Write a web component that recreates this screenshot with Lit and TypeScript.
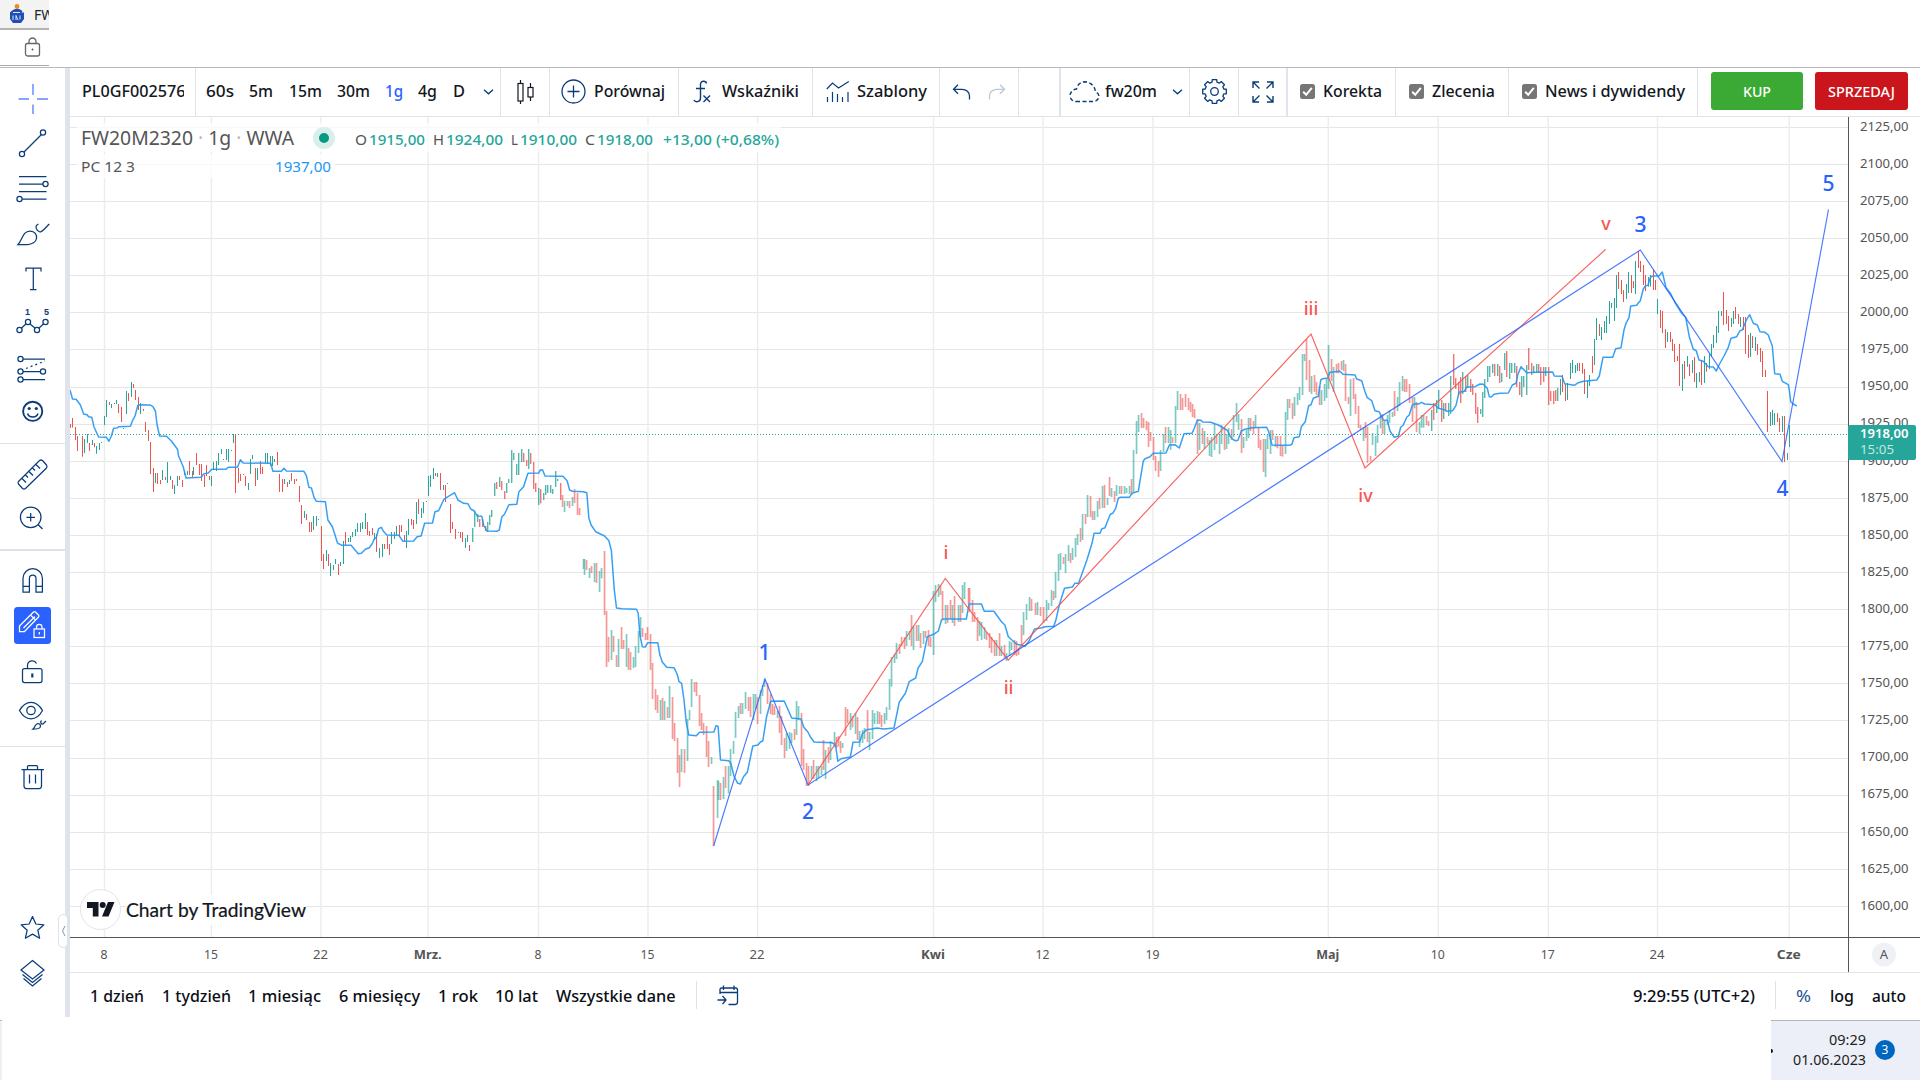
import { LitElement, html, svg, css } from "lit";
import { customElement, property } from "lit/decorators.js";

/* ---------- text that fills an exact width ---------- */
@customElement("fit-text")
class FitText extends LitElement {
  @property({ type: Number }) w = 0;
  static styles = css`
    :host { display: block; flex: none; white-space: nowrap; }
    span { display: inline-block; transform-origin: 0 50%; }
  `;
  render() { return html`<span><slot></slot></span>`; }
  firstUpdated() {
    const s = this.renderRoot.querySelector("span") as HTMLElement;
    const n = s.getBoundingClientRect().width;
    this.style.width = this.w + "px";
    if (n > 0) s.style.transform = `scaleX(${this.w / n})`;
  }
}

/* ---------- price bars: origin, scale and "x top bottom colour" ---------- */
interface Segment { ox: number; oy: number; sx: number; bars: string }
const SEGMENTS: Segment[] = [
  { ox: 60, oy: 360, sx: 2.8, bars: `29 192 203r;35 174 203r;43 201 240r;49 228 273r;63 228 290r;69 237 279g;77 222 249g;82 249 273r;91 240 255g;96 249 262r;102 258 281g;110 249 270g;116 246 249g;124 168 195g;130 120 171g;138 126 135r;144 132 144g;152 129 132g;158 120 132g;164 132 159r;172 141 186r;177 204 207g;186 93 162g;191 99 123r;200 66 111g;206 72 84r;211 90 120r;219 111 150r;225 129 162g;233 147 153r;239 186 216r;247 210 243r;253 246 342r;261 324 396r;267 339 369g;273 339 372r;281 360 372r;287 330 360g;295 351 360r;301 306 369g;309 348 360g;315 360 387r;320 375 402g;328 348 378g;334 348 360r;343 360 381r;348 333 345g;357 333 345g;362 303 345r;370 333 351r;374 321 345g;382 279 315r;390 312 345r;397 312 363r;404 345 381r;410 315 348r;418 348 360r;425 348 378g;429 306 330g;438 303 333g;443 279 315g;452 267 282g;458 297 300g;467 267 300g;472 267 306g;481 270 273g;486 222 249g;491 222 399r;499 324 369r;505 342 363r;513 342 345r;519 348 378r;528 369 390g;533 297 342g;539 285 297g;548 324 378r;553 324 360g;561 303 342r;567 321 342r;575 279 309g;581 279 312g;589 288 318g;595 288 318g;600 297 306g;609 276 315r;614 342 396r;623 357 396r;628 357 372g;637 366 381r;642 360 372g;648 339 363r;656 357 372r;662 357 363r;670 378 426r;676 435 492r;685 453 474g;690 462 480r;698 486 516r;704 486 516r;710 468 510g;718 468 498g;724 477 480g;732 498 603r;738 582 627r;746 570 603g;751 582 618r;757 609 648g;765 615 630g;771 597 612g;779 612 645r;786 606 618g;794 543 612g;799 516 555r;807 534 546g;813 528 546g;819 516 531g;827 507 528g;833 489 516g;841 489 516g;847 486 507g;855 459 507g;861 486 525r;867 513 528r;875 504 525r;880 519 540g;886 522 576r;894 564 594g;903 552 591g;909 552 567r;917 528 567r;923 552 585r;929 516 552g;937 516 537g;942 498 525g;951 495 531r;957 495 516r;964 525 543r;970 513 564g;976 477 525g;985 477 495r;990 480 507r;999 426 492g;1004 417 462r;1012 444 474g;1018 426 460g;1027 423 426g;1032 348 408g;1038 345 381g;1046 324 357g;1052 339 348r;1057 339 351g;1065 339 390r;1074 375 390g;1079 375 426r;1086 369 372g;1094 432 519r;1099 486 507r;1108 507 537r;1116 516 519g;1122 516 534r;1127 516 546r;1135 534 564g;1141 525 546g;1147 555 573r;1155 504 546g;1161 453 501g;1169 462 486g;1175 477 501r;1183 477 501r;1191 498 513r;1197 486 516g;1203 465 495g;1209 450 471g;1217 369 408g;1222 366 387r;1231 351 381g;1236 363 390r;1245 393 417r;1250 369 399g;1256 357 369g;1265 270 369g;1270 279 300g;1279 312 345g;1285 279 345g;1293 267 306g;1299 279 306r;1307 300 318r;1312 267 327g;1317 279 312r;1326 306 387r;1332 369 396r;1340 384 435g;1346 387 430r;1354 399 420g;1360 375 405g;1366 375 399g;1374 375 399g;1380 387 402g;1388 333 381g;1394 357 363g;1402 369 420r;1408 405 441r;1413 423 456g;1422 423 438g;1427 423 444r;1435 411 438g;1441 387 429r;1449 399 465r;1455 444 465r` },
  { ox: 560, oy: 530, sx: 2.904, bars: `67 87 117g;72 87 135g;78 90 120r;87 114 144g;92 108 129r;101 99 156g;107 99 159r;116 123 186g;121 114 145g;128 63 255r;136 243 411r;142 321 396r;150 300 390g;156 318 366r;165 375 411r;170 327 411g;180 291 357r;185 330 357r;192 312 411g;199 354 420r;205 366 420r;214 381 414g;220 348 411g;228 303 369g;234 261 321g;240 294 321r;249 309 330r;255 291 330r;264 312 420r;269 399 507r;278 477 540r;284 495 549r;292 510 570g;298 504 570r;304 513 570g;313 531 564r;319 468 564g;328 501 627r;333 579 633r;342 624 729r;348 675 771r;354 657 726g;362 657 729r;369 567 693g;377 540 570g;382 447 531g;391 456 486r;397 456 498r;406 495 588r;412 549 600r;418 579 615r;426 588 681r;432 633 711r;440 681 702g;446 768 948r;456 750 864g;461 753 810g;467 759 810r;475 741 807g;482 708 774r;490 708 790g;496 657 738g;504 633 672g;511 546 624g;519 528 564g;525 519 552r;530 519 552g;540 486 537g;546 501 543r;554 501 561r;561 492 570g;569 492 537g;574 501 582r;581 480 552g;589 465 498g;594 447 471g;602 459 522r;610 492 552r;618 522 555r;624 528 555r;632 543 564g;638 528 609r;644 558 645r;653 624 684r;659 609 663g;667 606 657g;673 609 639g;681 597 630r;687 513 615g;693 528 570g;702 549 708r;708 657 720r;716 699 768r;723 708 768r;731 708 747g;737 690 747r;746 708 753g;752 708 745g;758 708 735g;766 630 720r;771 660 747g;780 651 699r;786 633 690g;796 606 651g;802 621 654r;808 618 650r;815 633 669r;821 639 654g;830 531 618r;836 537 580r;844 549 600g;850 558 592r;858 549 612g;865 561 630r;871 603 651g;879 600 639g;885 594 627g;893 540 636r;900 606 660g;908 540 627g;914 549 582g;922 543 582g;928 546 582r;934 555 591r;943 549 582g;949 531 570g;958 447 540g;964 381 470g;972 372 399g;978 339 387g;985 342 372r;993 321 348r;999 321 357r;1007 303 348g;1015 303 330g;1022 255 348r;1028 288 360g;1034 285 333r;1042 285 333g;1048 309 354r;1056 303 342g;1062 303 324r;1071 300 348r;1077 321 351r;1086 183 375g;1091 165 216g;1098 162 201g;1105 165 195r;1111 183 270r;1120 225 282g;1126 225 279r;1135 210 267r;1140 225 279g;1147 198 288r;1156 225 276g;1162 225 276r;1169 165 249g;1176 156 207g;1185 174 222r;1190 174 246r;1199 210 276r;1205 246 276r;1211 261 333r;1219 273 318g;1225 276 330g;1234 291 327g;1240 306 330r;1248 309 354r;1254 321 369r;1262 330 378r;1268 330 378g;1275 309 378r;1282 348 378g;1290 345 384r;1296 369 393g;1304 333 378g;1312 336 360g;1319 330 375r;1325 333 378r;1332 357 375r;1339 285 345r;1346 246 315g;1354 222 270g;1362 201 243g;1368 207 243r;1380 219 255r;1388 216 255g;1396 231 258r;1403 231 279r;1412 210 273g;1418 219 240g;1427 180 228g;1433 183 210r` },
  { ox: 1000, oy: 380, sx: 3, bars: `165 576 654g;174 522 603g;180 519 570g;189 531 552r;195 522 579g;204 495 543g;210 519 549r;216 504 540g;225 474 531g;231 462 495g;240 444 486r;246 402 480g;255 402 432r;261 345 411g;270 348 411r;276 393 420r;282 393 420g;291 363 411g;297 354 387r;306 318 384g;312 315 384r;321 354 375g;327 291 348r;333 324 351g;342 333 366r;348 315 348g;357 318 342g;363 318 342r;372 318 342g;378 324 339g;387 318 342g;393 297 345r;399 210 336g;408 123 222g;414 105 156g;423 99 144r;429 114 144r;438 123 150r;444 126 201r;450 156 183r;459 171 240r;465 228 273r;474 243 291r;480 210 273g;489 162 216g;495 141 189r;504 141 189g;510 150 210g;516 171 189r;525 78 189g;531 33 90g;540 42 90r;546 54 90r;555 42 81r;564 54 90r;570 66 96r;576 72 111r;582 87 114r;591 117 222r;597 129 210g;606 144 192r;612 153 207g;621 171 192r;627 180 228g;633 171 231g;642 132 210g;648 168 192r;657 162 222g;663 135 192g;672 141 210r;678 162 207g;684 144 192g;693 147 180r;699 105 171g;708 69 126g;714 102 150g;723 117 219r;729 171 204g;738 150 183g;744 114 174g;750 114 153r;759 123 162r;765 105 144g;774 141 204r;780 180 210r;789 177 276r;795 177 291g;801 165 207g;810 150 222g;816 150 180r;825 168 201g;831 168 205r;840 168 228r` },
  { ox: 1280, oy: 320, sx: 3, bars: `6 375 410r;16 276 402g;22 237 300g;27 237 264r;37 249 297r;43 231 288g;52 219 255g;58 201 240g;67 102 225g;73 102 123g;79 57 180r;87 120 216r;94 168 222g;102 165 216r;109 186 225r;117 198 255r;124 210 255g;132 192 243g;139 177 234g;145 75 207g;153 117 183r;160 141 216g;169 132 160r;174 129 160r;183 123 150r;189 120 153g;195 132 243r;204 231 252r;211 177 288g;219 174 237r;226 222 282r;235 258 324r;241 315 330r;249 321 363g;255 306 354r;262 321 429r;270 408 424r;277 339 375g;285 348 408g;292 315 369g;300 285 325g;307 282 342r;313 300 342g;321 285 315g;328 270 309g;337 276 291g;343 213 288r;352 231 273g;358 186 258g;366 168 213g;373 177 216r;379 177 216r;388 192 249r;396 231 306r;403 231 265g;409 246 336r;418 306 342g` },
  { ox: 1420, oy: 220, sx: 3, bars: `3 585 623g;11 585 623g;19 588 615r;25 603 618r;34 570 633g;40 549 600r;49 540 579g;55 510 567g;64 540 606r;70 549 597g;76 549 573r;85 549 588g;91 468 582g;100 402 495r;106 474 507r;115 486 525r;121 471 549r;127 456 522g;136 468 516r;142 465 504g;151 477 516r;157 492 525r;166 519 582r;172 561 609r;181 567 582g;187 516 591g;193 477 534g;202 438 486g;208 438 471g;217 432 459g;223 432 468r;232 432 468g;238 438 489r;244 459 486g;253 399 450g;259 393 471r;268 429 477g;274 429 459g;283 429 459g;289 438 501r;298 486 525r;304 468 531g;310 468 501g;319 435 525g;325 384 450r;334 429 465r;340 438 460g;349 432 458g;355 432 458r;361 441 495r;370 441 486r;376 441 468g;385 441 555r;391 513 543r;400 513 552r;406 510 543r;412 504 543g;421 477 525g;427 465 516r;436 492 543r;442 489 540g;451 429 477g;457 420 459g;466 435 459g;472 429 453g;478 429 453r;487 429 461r;493 447 522r;502 482 534g;508 465 498g;517 408 459r;523 357 435g;530 294 360g;538 312 348r;544 321 360g;553 303 339g;559 288 339g;568 243 312g;574 249 264g;583 234 303g;589 165 264g;595 156 207r;604 180 222r;610 210 246r;619 192 237g;625 156 219g;634 165 219r;640 183 204r;646 123 222g;655 93 144r;661 123 156r;670 135 195r;676 165 213r;685 171 200g;691 165 200g;700 150 210r;706 180 210r;712 237 282g;721 270 324r;727 273 339r;736 327 384r;742 336 366g;751 336 366r;757 357 393r;763 372 426r;772 408 423r;778 372 498r;787 432 513g;793 423 477r;802 408 440g;808 432 468r;817 420 459g;823 411 486r;829 459 504g;838 456 486g;845 420 495r;853 408 489g;859 429 455r;868 399 447g;874 372 411g;880 345 384g;889 318 369g;895 273 339g;904 273 288g;910 216 315r;919 270 312r;925 288 333r;934 294 321g;940 273 312g;946 261 297r;955 282 312r;961 291 321g;970 291 330r;976 291 402r;985 345 414r;991 339 411g;998 348 384r;1006 351 393g;1012 372 405r;1021 384 426r;1027 393 471r;1036 450 471r;1042 513 636r;1051 576 618g;1057 570 615g;1063 579 615g;1072 579 606r;1078 594 636r;1087 588 636g;1093 588 726r;1102 699 720g;1108 615 681g` },
];

const AVERAGE: [number, number, number, string][] = [
  [60, 360, 2.8, `28,90 35,117 45,118 57,135 66,162 76,164 80,170 89,172 95,200 108,231 130,232 137,244 144,228 150,205 160,204 165,200 197,199 203,182 210,168 218,136 225,134 253,135 260,140 267,153 272,195 279,228 298,229 312,243 329,268 332,288 345,320 353,354 395,352 402,342 415,339 425,328 465,328 471,322 497,322 505,299 513,309 590,310 596,334 620,334 627,325 634,333 683,334 690,347 697,382 704,384 712,414 718,424 743,425 750,480 763,501 777,549 789,556 815,556 835,581 844,580 855,568 866,563 874,552 880,537 886,532 892,506 900,502 905,513 915,525 949,526 960,544 990,543 1000,530 1011,528 1021,490 1043,489 1050,455 1060,452 1075,418 1083,412 1105,398 1114,420 1130,430 1142,431 1150,447 1160,453 1168,468 1181,469 1186,495 1195,513 1223,514 1230,510 1237,471 1245,462 1257,434 1279,433 1285,395 1298,380 1310,340 1340,339 1345,330 1351,329 1358,348 1408,349 1420,362 1427,390 1435,394 1465,395 1475,398 1481,475 1487,495 1500,515 1525,528 1537,542 1544,572 1552,690`],
  [560, 530, 2.904, `164,234 180,236 222,238 227,250 232,315 239,350 247,351 255,338 284,338 290,375 297,396 310,412 331,413 340,432 346,455 353,460 360,510 367,580 374,615 396,617 405,607 447,606 453,587 459,589 466,690 490,692 496,700 505,738 516,760 524,762 533,740 544,727 560,648 575,645 582,636 589,633 600,560 612,514 651,513 673,564 700,567 708,592 720,606 727,620 738,636 790,638 800,645 807,694 816,686 843,681 851,637 870,636 878,612 890,599 905,597 920,594 940,597 970,594 985,517 1003,490 1014,455 1033,444 1040,414 1052,395 1067,320 1088,311 1099,303 1108,270 1113,267 1180,267 1188,222 1224,222 1232,244 1260,244 1270,258 1282,275 1292,285 1302,320 1325,342 1350,349 1362,333 1378,297 1400,293 1407,290 1434,289 1440,270 1450,225 1465,175 1488,171 1495,160 1506,160 1530,90 1545,40 1551,10`],
  [1000, 380, 3, `300,460 305,447 315,443 322,425 331,403 338,400 347,385 355,355 362,352 388,352 396,340 415,334 430,243 435,236 450,230 460,220 498,219 508,195 525,194 538,204 552,161 576,160 583,145 592,121 603,121 608,126 632,127 655,135 683,152 690,168 700,179 708,182 714,181 724,153 735,148 756,143 800,142 806,155 816,195`],
  [1280, 320, 3, `0,376 30,376 36,372 42,353 58,350 64,320 76,305 86,257 93,254 100,235 115,229 122,180 128,176 143,174 150,157 180,154 189,163 225,165 230,177 245,182 255,215 262,233 275,242 285,272 297,275 310,300 322,301 330,333 343,352 355,349 362,322 370,315 380,292 388,285 396,258 403,251 417,252`],
  [1420, 220, 3, `4,547 14,552 45,554 55,565 75,570 80,574 98,572 108,556 117,517 133,514 140,501 165,500 180,492 190,493 202,505 208,530 214,531 222,523 240,520 265,519 277,495 288,490 293,465 303,440 320,458 345,457 398,456 403,468 426,469 434,491 463,496 475,488 490,484 530,480 538,468 549,412 578,412 587,386 603,383 612,330 618,310 627,293 632,258 650,256 655,249 661,242 670,207 676,198 684,196 690,175 697,168 718,167 727,156 738,203 752,221 765,248 785,280 797,292 808,350 820,388 829,392 837,420 850,424 865,440 880,441 889,453 897,435 912,408 925,382 933,355 950,350 960,332 967,330 980,298 989,284 1000,310 1012,315 1020,335 1035,337 1045,345 1050,360 1057,377 1064,461 1080,463 1087,484 1105,494 1108,510 1112,545 1120,552 1130,558`],
];

const UP = "#26a69a";
const DOWN = "#ef5350";

const bars = () => SEGMENTS.flatMap(s => s.bars.split(";").map(b => {
  const [x, t, e] = b.split(" ");
  const px = Math.floor(s.ox + Number(x) / s.sx);
  const y1 = s.oy + Number(t) / 3;
  const y2 = s.oy + parseInt(e, 10) / 3;
  const mid = px > 560 && px < 1430;
  const semi = !mid && px > 470 && px < 1560;
  const color = e.endsWith("g") ? UP : DOWN;
  return svg`<rect x=${mid ? px - 0.3 : px} y=${y1} width=${mid ? 1.7 : semi ? 1.4 : 1} height=${y2 - y1}
    fill=${color} opacity=${mid ? 0.6 : semi ? 0.8 : 1}></rect>`;
}));

const averagePoints = AVERAGE.map(([ox, oy, sx, pts]) => pts.split(" ").map(p => {
  const [x, y] = p.split(",").map(Number);
  return `${(ox + x / sx).toFixed(1)},${(oy + y / 3).toFixed(1)}`;
}).join(" ")).join(" ");

const DAYS: [number, string, number][] = [
  [104.5, "8", 7], [211.4, "15", 14], [321, "22", 15], [428.2, "Mrz.", 28], [538.5, "8", 7], [648, "15", 14],
  [757.6, "22", 15], [933.5, "Kwi", 24], [1043, "12", 14], [1153, "19", 14], [1328.3, "Maj", 23],
  [1438.3, "10", 14], [1548.3, "17", 14], [1657.5, "24", 15], [1789.3, "Cze", 24],
];
const MONTHS = ["Mrz.", "Kwi", "Maj", "Cze"];

const WAVES: [number, number, string, string][] = [
  [764.5, 660, "1", "blue"], [808, 819, "2", "blue"], [1640.5, 231.5, "3", "blue"], [1782.5, 495.5, "4", "blue"], [1828.5, 190.5, "5", "blue"],
  [946, 559, "i", "red"], [1008.5, 694, "ii", "red"], [1311, 315, "iii", "red"], [1365.5, 502, "iv", "red"], [1606, 230, "v", "red"],
];

const gearPath = (() => {
  const pts: string[] = [];
  for (let i = 0; i < 8; i++) {
    const a = (i * Math.PI) / 4 - Math.PI / 2;
    for (const [d, r] of [[-0.26, 9.6], [-0.19, 12], [0.19, 12], [0.26, 9.6]]) {
      pts.push(`${(12.5 + r * Math.cos(a + d)).toFixed(2)} ${(12.5 + r * Math.sin(a + d)).toFixed(2)}`);
    }
  }
  return "M" + pts.join("L") + "Z";
})();

const starPath = (() => {
  const pts: string[] = [];
  for (let i = 0; i < 10; i++) {
    const a = (i * Math.PI) / 5 - Math.PI / 2;
    const r = i % 2 ? 5.6 : 12;
    pts.push(`${(32.5 + r * Math.cos(a)).toFixed(1)} ${(928.5 + r * Math.sin(a)).toFixed(1)}`);
  }
  return "M" + pts.join("L") + "Z";
})();

/* ---------- side tools: top, bottom, drawing ---------- */
const tool = (top: number, bottom: number, body: unknown, cls = "") => html`
  <svg class="tool ${cls}" width="65" height=${bottom - top} viewBox="0 ${top} 65 ${bottom - top}">${body}</svg>`;
const dot = (x: number, y: number, r = 2.6) => svg`<circle cx=${x} cy=${y} r=${r} fill="#fff"></circle>`;

@customElement("app-root")
class AppRoot extends LitElement {
  static styles = css`
    :host { display: block; width: 1920px; height: 1080px; overflow: hidden; background: #fff; color: #131722;
      font-family: "Noto Sans", "Open Sans", sans-serif; font-size: 16.5px; }
    * { box-sizing: border-box; }
    svg { display: block; flex: none; fill: none; }
    .page { display: grid; grid-template-rows: 67px 950px 63px; height: 1080px; }
    .tab { width: 49px; height: 30px; background: #f3f3f3; border-bottom: 2px solid #b4b4b4; display: flex; align-items: center;
      padding-left: 9px; gap: 9px; overflow: hidden; font-size: 15px; color: #222; }
    .address { width: 49px; height: 36px; border-bottom: 1px solid #a9a9a9; padding: 7px 0 0 24px; }
    .app { display: grid; grid-template-columns: 65px 5px 1850px; border-top: 1px solid #b9babd; }
    .side { display: flex; flex-direction: column; position: relative; }
    .tool { stroke: #0b3c7a; stroke-width: 1.25; }
    .tool.cross { stroke: #5c86ff; stroke-width: 1.4; }
    .tool text { fill: #0b3c7a; stroke: none; font: 700 9px "Liberation Sans", sans-serif; text-anchor: middle; }
    .rule { height: 1px; background: #dfe1ea; flex: none; }
    .rule.thick { height: 2px; }
    .spring { flex: 1; }
    .strip { background: #e0e3eb; }
    .collapse { position: absolute; left: 58px; top: 846px; width: 10px; height: 34px; border: 1px solid #dfe2ec; border-radius: 5px;
      background: #fff; display: flex; align-items: center; justify-content: center; z-index: 2; }
    .main { display: grid; grid-template-rows: 49px 855px 45px; }
    .bar { display: grid; grid-template-columns: 126px 305px 49px 129px 134px 127px 79px 42px 129px 49px 49px 108px 113px 189px 1fr;
      border-bottom: 1px solid #e0e3eb; }
    .cell { border-right: 1px solid #e0e3eb; display: flex; align-items: center; padding-bottom: 1px; min-width: 0; }
    .cell:last-child { border-right: 0; }
    .cell > fit-text, .clip { font-weight: 500; margin-top: -2px; }
    .double { border-right: 2px solid #e0e3eb; }
    .symbol { padding-left: 12px; }
    .clip { width: 102px; overflow: hidden; }
    .times { padding-left: 10px; gap: 15.3px; }
    .times .down { margin-left: 3px; }
    .active { color: #2962ff; }
    .center { justify-content: center; }
    .compare { padding-left: 11px; gap: 8px; }
    .indic { padding-left: 14px; gap: 11px; }
    .templ { padding-left: 13px; gap: 7px; }
    .hist { padding-left: 12px; gap: 17px; }
    .layout { padding-left: 8px; gap: 5px; }
    .layout .down { margin-left: 10px; }
    .check { padding-left: 12px; gap: 8px; }
    .check.second { padding-left: 13px; }
    .box { width: 15px; height: 15px; border-radius: 2.5px; background: #767676; flex: none; }
    .trade { padding-left: 13px; gap: 12px; padding-bottom: 2px; }
    .btn { height: 38px; border-radius: 3px; color: #fff; font-size: 15px; display: flex; align-items: center; justify-content: center; font-weight: 500; }
    .buy { width: 92px; background: #3aaa35; }
    .sell { width: 93px; background: #c9151b; }
    .plot { position: relative; }
    .legend { position: absolute; left: 7px; top: 6px; display: flex; flex-direction: column; }
    .row { display: flex; align-items: center; height: 29px; width: 704px; padding-left: 4px; background: rgba(255,255,255,.72); color: #555; }
    .row.study { height: 24px; width: 258px; margin-top: 2px; font-size: 15px; }
    .row.study .val { margin-left: 140px; color: #2196f3; }
    .title { font-size: 19px; }
    .title i { font-style: normal; color: #b5b8c4; }
    .pulse { width: 22px; height: 22px; border-radius: 50%; background: #d9efec; margin: 0 20px 0 19px; display: flex; flex: none; align-items: center; justify-content: center; }
    .pulse b { width: 10px; height: 10px; border-radius: 50%; background: #089981; }
    .ohlc { display: flex; font-size: 15px; padding-top: 3px; }
    .ohlc .v { color: #26a69a; margin: 0 8px 0 2px; font-weight: 500; }
    .credit { position: absolute; left: 10px; top: 772px; display: flex; align-items: center; gap: 5px; }
    .badge { width: 41px; height: 41px; border-radius: 50%; background: #fff; border: 1px solid #e3e4e8; display: flex; align-items: center; justify-content: center; }
    .mark { fill: #131722; }
    .by { font: 400 18.5px "Lato", sans-serif; color: #131722; background: rgba(255,255,255,.9); line-height: 30px; -webkit-text-stroke: .2px #131722; }
    .h { stroke: #e6e6e7; }
    .v { stroke: #ececec; }
    .axis { stroke: #555; }
    .plot text { font: 13px "Noto Sans", sans-serif; fill: #555; }
    .plot text.day { font-size: 13px; text-anchor: middle; }
    .plot text.bold { font-weight: 700; }
    .plot text.blue { font-size: 21px; font-weight: 500; fill: #2962ff; text-anchor: middle; }
    .plot text.red { font-size: 18px; font-weight: 500; fill: #f65550; text-anchor: middle; }
    .plot text.last { font-weight: 600; fill: #fff; }
    .plot text.count { fill: #c3e6e2; }
    .foot { border-top: 1px solid #e0e3eb; display: flex; align-items: center; padding: 0 14px 0 20px; color: #0b0e16; }
    .foot fit-text { font-weight: 500; }
    .ranges { display: flex; gap: 17.7px; }
    .sep { width: 1px; height: 28px; background: #dfe1ea; margin: 0 20px; }
    .clock { margin-left: auto; }
    .foot .pct { color: #1d4f8f; font-weight: 400; }
    .modes { display: flex; gap: 18.5px; }
    .taskbar { display: flex; align-items: flex-end; justify-content: space-between; }
    .stub { width: 2px; height: 60px; background: #eef0f6; border-top: 1px solid #b9babd; }
    .tray { width: 149px; height: 60px; background: #edeff8; border-top: 1px solid #b4b5ba; display: flex; align-items: center; color: #222; font-size: 15px; }
    .nub { width: 2px; height: 4px; background: #111; border-radius: 0 2px 2px 0; }
    .when { display: flex; flex-direction: column; align-items: flex-end; width: 93px; line-height: 20px; margin-top: -4px; }
    .count3 { margin: -2px 0 0 9px; width: 20px; height: 20px; border-radius: 50%; background: #0067c0; color: #fff; font-size: 12px; line-height: 20px; text-align: center; }
  `;

  private sideTools() {
    return html`
      ${tool(68, 122, svg`<path d="M33 84V95M33 104.500V114M18.500 99H29M37 99H48"></path>`, "cross")}
      ${tool(122, 166, svg`<path d="M23.500 152.500L41.500 134.500"></path>${dot(43, 132.5)}${dot(22, 154)}`)}
      ${tool(166, 212, svg`<path d="M19 176.500H46.500M19 184H43M19 191.500H46.500M22 199H46.500"></path>${dot(45.5, 184)}${dot(19.5, 199)}`)}
      ${tool(212, 256, svg`<path d="M18 244.500C22.500 240 22.500 231 30 231C35 231 37 235 36.500 238.500C36 242 32 244.500 27.500 244.500ZM38.500 224C34 226 36.500 231 40 232C42 232 43 230.500 49.300 224"></path>`)}
      ${tool(256, 301, svg`<path d="M26 271.500V268H41V271.500M33.300 268V289.500M30 289.500H36.500"></path>`)}
      ${tool(301, 345, svg`<path d="M21 328.500L26.500 323.500M29.500 323.500L35.500 328.500M38.500 328.500L44 323.500"></path>${dot(19.5, 330)}${dot(28, 322)}${dot(37, 330)}${dot(45.5, 322)}<text x="27.500" y="314.500">1</text><text x="46.500" y="314.500">5</text>`)}
      ${tool(345, 390, svg`<path d="M23 359H45M23 371.500H41M23 379.500H45"></path><path d="M26 368.500L45 361" stroke-dasharray="2 3"></path>${dot(20.5, 359)}${dot(20.5, 371.5)}${dot(43, 371.5)}${dot(20.5, 379.5)}`)}
      ${tool(390, 443, svg`<circle cx="32.700" cy="411.300" r="9.600" stroke-width="1.900"></circle><g fill="#0b3c7a" stroke="none"><circle cx="29.200" cy="408.500" r="1.600"></circle><circle cx="36.300" cy="408.500" r="1.600"></circle></g><path d="M27.500 413.500C29 418 36.500 418 38 413.500" stroke-width="1.500"></path>`)}
      <div class="rule"></div>
      ${tool(444, 496, svg`<path d="M18.500 481.500L39.500 460.500Q41 459.500 42.500 460.500L46.500 465Q47.500 466.500 46.500 468L25.500 488.500Q24 489.500 22.500 488.500L18.500 484Q17.500 482.500 18.500 481.500ZM22 478.500L26 482.500M25.500 475L28 477.500M29 471.500L33 475.500M32.500 468L35 470.500M36 464.500L40 468.500"></path>`)}
      ${tool(496, 549, svg`<circle cx="30.700" cy="517.300" r="10.300"></circle><path d="M26.500 517.300H35M30.700 513V521.500M38 524.500L42.500 529"></path>`)}
      <div class="rule thick"></div>
      ${tool(551, 602, svg`<path d="M23 592V578.300A9.700 9.700 0 0 1 42.400 578.300V592H36V578.500A3.300 3.300 0 0 0 29.400 578.500V592ZM23 586.300H29.400M36 586.300H42.400"></path>`)}
      ${tool(602, 648, svg`<rect x="14" y="607" width="37" height="37" rx="3.500" fill="#2962ff" stroke="none"></rect><g stroke="#fff"><path d="M19.500 631.500V626L33.500 612Q34.500 611 35.500 612L38.500 615Q39.500 616 38.500 617L24.500 631.500ZM30.500 615L35.500 620M23.500 628L35 616.500"></path><rect x="34" y="629" width="10.500" height="8.500"></rect><path d="M36.500 629V627A2.700 2.700 0 0 1 42 627V629M39.300 632V634.500"></path></g>`)}
      ${tool(648, 693, svg`<rect x="22.500" y="668.500" width="19.500" height="14" rx="2"></rect><path d="M27.500 668.500V665A4.800 4.800 0 0 1 36.500 663.500"></path><path d="M32.300 673.500V677.500" stroke-width="2.200"></path>`)}
      ${tool(693, 746, svg`<path d="M19.500 710.500C25.500 699.500 36.500 699.500 42.500 710.500C36.500 721.500 25.500 721.500 19.500 710.500Z"></path><circle cx="31" cy="710.500" r="4.200"></circle><path d="M33 729C35.500 727 35 723.500 38 723.500C40.500 723.500 41 726 40 727.500C39 729 36 729 33 729ZM41.500 720.500C39.500 722.500 41.500 724.500 43 724L46 721"></path>`)}
      <div class="rule"></div>
      ${tool(747, 805, svg`<path d="M21.500 769.500H44M27.500 769.500V766.500Q27.500 765.500 28.500 765.500H36.500Q37.500 765.500 37.500 766.500V769.500M24 769.500V786Q24 788.500 26.500 788.500H39Q41.500 788.500 41.500 786V769.500M29.500 774.500V783.500M35.500 774.500V783.500"></path>`)}
      <div class="spring"></div>
      ${tool(904, 950, svg`<path d=${starPath} stroke-linejoin="round"></path>`)}
      ${tool(950, 1017, svg`<path d="M32.500 960.500L44 970L32.500 979L21 970ZM22.500 974.500L32.500 982.500L42.500 974.500M23.500 978.500L32.500 986L41.500 978.500"></path>`)}
      <div class="collapse"><svg width="5" height="12" viewBox="0 0 5 12" stroke="#7d9bb0"><path d="M4 1L1.500 6L4 11"></path></svg></div>`;
  }

  private toolbar() {
    const down = html`<svg class="down" width="11" height="6" viewBox="0 0 11 6" stroke="#0b3c7a" stroke-width="1.3"><path d="M1 .7L5.500 4.800L10 .7"></path></svg>`;
    const box = html`<span class="box"><svg width="15" height="15" viewBox="0 0 15 15" stroke="#fff" stroke-width="2"><path d="M3.200 7.800L6.200 10.800L11.800 3.800"></path></svg></span>`;
    return html`
      <div class="bar">
        <div class="cell symbol"><div class="clip"><fit-text .w=${103.5}>PL0GF002576</fit-text></div></div>
        <div class="cell times">
          <fit-text .w=${28}>60s</fit-text><fit-text .w=${24}>5m</fit-text><fit-text .w=${33}>15m</fit-text><fit-text .w=${33}>30m</fit-text>
          <fit-text class="active" .w=${18}>1g</fit-text><fit-text .w=${19}>4g</fit-text><fit-text .w=${12}>D</fit-text>${down}
        </div>
        <div class="cell center"><svg width="20" height="26" viewBox="0 0 20 26" stroke="#131722" stroke-width="1.200"><path d="M5.500 1V4M5.500 22V25M15.500 4V8M15.500 18V22"></path><rect x="3" y="4.500" width="5" height="17.500"></rect><rect x="13" y="8.500" width="5" height="9.500"></rect></svg></div>
        <div class="cell compare"><svg width="25" height="25" viewBox="0 0 25 25" stroke="#0b3c7a" stroke-width="1.300"><circle cx="12.500" cy="12.500" r="11.500"></circle><path d="M6.500 12.500H18.500M12.500 6.500V18.500"></path></svg><fit-text .w=${71}>Porównaj</fit-text></div>
        <div class="cell indic"><svg width="18" height="23" viewBox="0 0 18 23" stroke="#0b3c7a" stroke-width="1.400"><path d="M13.500 3.500C13 .5 8 .5 7.500 4V18C7.500 22.500 2 22.500 1 20M3 8.500H12M10.500 15.500L17 22M17 15.500L10.500 22"></path></svg><fit-text .w=${77}>Wskaźniki</fit-text></div>
        <div class="cell templ"><svg width="24" height="23" viewBox="0 0 24 23" stroke="#0b3c7a" stroke-width="1.200"><path d="M.8 9L6.500 3L12.500 8L22.800 1.500M1.500 17V22M6.500 12V22M11.500 14V22M16.500 17V22M22 12V22"></path></svg><fit-text .w=${70}>Szablony</fit-text></div>
        <div class="cell hist">
          <svg width="19" height="16" viewBox="0 0 19 16" stroke="#0b3c7a" stroke-width="1.300"><path d="M6 .8L1.500 5.300L6 9.800M1.800 5.300H10C14.500 5.300 17.500 8.500 17.500 12V15.500"></path></svg>
          <svg width="18" height="16" viewBox="0 0 18 16" stroke="#b9c7d8" stroke-width="1.300"><path d="M12 .8L16.500 5.300L12 9.800M16.200 5.300H9C4.500 5.300 1.500 8.500 1.500 12V15.500"></path></svg>
        </div>
        <div class="cell double"></div>
        <div class="cell layout"><svg width="31" height="23" viewBox="0 0 31 23" stroke="#0b3c7a" stroke-width="1.400" stroke-dasharray="4 2.500"><path d="M7 21.500H25C28 21 30.300 18.500 29.800 15.500C29.500 13.500 28 12.500 26.500 12C26 6 21.500 2 16 1.700C11.500 2 8.500 4.500 7.500 9C4 9.500 1 12 1 16C1.500 19.500 4 21.500 7 21.500Z"></path></svg><fit-text .w=${52}>fw20m</fit-text>${down}</div>
        <div class="cell center"><svg width="25" height="25" viewBox="0 0 25 25" stroke="#0b3c7a" stroke-width="1.300" stroke-linejoin="round"><path d=${gearPath}></path><circle cx="12.500" cy="12.500" r="3.800"></circle></svg></div>
        <div class="cell center double"><svg width="22" height="22" viewBox="0 0 22 22" stroke="#0b3c7a" stroke-width="1.400"><path d="M1 7V1H7M1 1L7.500 7.500M15 1H21V7M21 1L14.500 7.500M1 15V21H7M1 21L7.500 14.500M21 15V21H15M21 21L14.500 14.500"></path></svg></div>
        <div class="cell check">${box}<fit-text .w=${59}>Korekta</fit-text></div>
        <div class="cell check second">${box}<fit-text .w=${63}>Zlecenia</fit-text></div>
        <div class="cell check second">${box}<fit-text .w=${140}>News i dywidendy</fit-text></div>
        <div class="cell trade"><div class="btn buy"><fit-text .w=${28}>KUP</fit-text></div><div class="btn sell"><fit-text .w=${67}>SPRZEDAJ</fit-text></div></div>
      </div>`;
  }

  private plot() {
    const rows = Array.from({ length: 22 }, (_, i) => i);
    return html`
      <div class="plot">
        <svg width="1850" height="855" viewBox="70 117 1850 855">
          ${rows.map(i => { const y = Math.floor(127.3 + i * 37.1) + 0.5; return svg`<line class="h" x1="70" x2="1848" y1=${y} y2=${y}></line>`; })}
          ${DAYS.map(([x]) => svg`<line class="v" stroke-width="1.400" x1=${x} x2=${x} y1="117" y2="937"></line>`)}
          ${bars()}
          <polyline points=${averagePoints} stroke="#2196f3" stroke-width="1.500" stroke-linejoin="round" opacity=".9"></polyline>
          <line x1="70" x2="1848" y1="434.500" y2="434.500" stroke=${UP} stroke-dasharray="1 2"></line>
          <polyline points="808,785 945.300,578.500 1008.300,660 1311,334 1365,468 1605.500,249.500" stroke="#f6524f" stroke-width="1.150" opacity=".9"></polyline>
          <polyline points="713.600,846 765,679 808,785 1640.300,250 1782,461.500 1828.500,209.500" stroke="#2962ff" stroke-width="1.150" opacity=".85"></polyline>
          ${WAVES.map(([x, y, t, c]) => svg`<text class=${c} x=${x} y=${y}>${t}</text>`)}
          <line class="axis" x1="1848.500" x2="1848.500" y1="117" y2="972"></line>
          <line class="axis" x1="70" x2="1920" y1="937.500" y2="937.500"></line>
          ${rows.map(i => svg`<text x="1860" y=${130.6 + i * 37.1} textLength="48.500" lengthAdjust="spacingAndGlyphs">${2125 - i * 25},00</text>`)}
          <rect x="1848" y="425" width="68" height="35" rx="2" fill=${UP}></rect>
          <text class="last" x="1860" y="437.600" textLength="48.500" lengthAdjust="spacingAndGlyphs">1918,00</text>
          <text class="count" x="1860" y="454" textLength="34" lengthAdjust="spacingAndGlyphs">15:05</text>
          ${DAYS.map(([x, t, w]) => svg`<text class="day ${MONTHS.includes(t) ? "bold" : ""}" x=${x - 0.5} y="958.700" textLength=${w} lengthAdjust="spacingAndGlyphs">${t}</text>`)}
          <circle cx="1884" cy="954.500" r="12" fill="#eff1f6"></circle>
          <text class="day" x="1884" y="959">A</text>
        </svg>
        <div class="legend">
          <div class="row">
            <fit-text class="title" .w=${213}>FW20M2320 <i>·</i> 1g <i>·</i> WWA</fit-text>
            <span class="pulse"><b></b></span>
            <div class="ohlc">
              <fit-text .w=${12}>O</fit-text><fit-text class="v" .w=${56}>1915,00</fit-text>
              <fit-text .w=${11}>H</fit-text><fit-text class="v" .w=${57}>1924,00</fit-text>
              <fit-text .w=${7}>L</fit-text><fit-text class="v" .w=${57}>1910,00</fit-text>
              <fit-text .w=${10}>C</fit-text><fit-text class="v" .w=${56}>1918,00</fit-text>
              <fit-text class="v" .w=${116}>+13,00 (+0,68%)</fit-text>
            </div>
          </div>
          <div class="row study"><fit-text .w=${54}>PC 12 3</fit-text><fit-text class="val" .w=${56}>1937,00</fit-text></div>
        </div>
        <div class="credit">
          <span class="badge"><svg class="mark" width="28" height="15" viewBox="0 0 28 15"><path d="M0 0H11.500V14.500H5.800V6H0Z"></path><circle cx="15.700" cy="3.100" r="3"></circle><path d="M21 0H27.500L21.500 14.500H15Z"></path></svg></span>
          <fit-text class="by" .w=${180}>Chart by TradingView</fit-text>
        </div>
      </div>`;
  }

  private footer() {
    const ranges: [string, number][] = [["1 dzień", 54], ["1 tydzień", 69], ["1 miesiąc", 73], ["6 miesięcy", 81], ["1 rok", 40], ["10 lat", 43], ["Wszystkie dane", 119.5]];
    return html`
      <div class="foot">
        <div class="ranges">${ranges.map(([t, w]) => html`<fit-text .w=${w}>${t}</fit-text>`)}</div>
        <span class="sep"></span>
        <svg width="22" height="21" viewBox="0 0 22 21" stroke="#0b3c7a" stroke-width="1.300"><path d="M3 9V4.500Q3 3 4.500 3H18.500Q20.500 3 20.500 5V17Q20.500 19.500 18 19.500H11.500M3 7.500H20.500M6.500 .5V5M17 .5V5M.5 15H9M5.500 11L9 15L5.500 19"></path></svg>
        <fit-text class="clock" .w=${122}>9:29:55 (UTC+2)</fit-text>
        <span class="sep"></span>
        <div class="modes"><fit-text class="pct" .w=${15}>%</fit-text><fit-text .w=${24}>log</fit-text><fit-text .w=${34}>auto</fit-text></div>
      </div>`;
  }

  render() {
    return html`
      <div class="page">
        <div class="chrome">
          <div class="tab">
            <svg width="16" height="20" viewBox="0 0 16 20"><circle cx="8" cy="2.500" r="2.400" fill="#f08a24"></circle><path d="M2.500 7Q8 2.500 13.500 7L12.500 8.500H15V15L12 19H4L1 15V8.500Z" fill="#1f4fb4"></path><path d="M4 8.500H11M4 11.500V16M7 11.500V16M7 11.500L9 16M11 11.500V15.500" stroke="#dce6fa" stroke-width="1"></path></svg>
            <fit-text .w=${20}>FW</fit-text>
          </div>
          <div class="address"><svg width="17" height="21" viewBox="0 0 17 21" stroke="#666" stroke-width="1.300"><rect x="1.500" y="6.500" width="14" height="12.500" rx="2"></rect><path d="M5 6.500V4.500A3.500 3.500 0 0 1 12 4.500V6.500"></path><circle cx="8.500" cy="12.500" r="1" fill="#555" stroke="none"></circle></svg></div>
        </div>
        <div class="app">
          <div class="side">${this.sideTools()}</div>
          <div class="strip"></div>
          <div class="main">${this.toolbar()}${this.plot()}${this.footer()}</div>
        </div>
        <div class="taskbar">
          <div class="stub"></div>
          <div class="tray">
            <span class="nub"></span>
            <div class="when"><fit-text .w=${37}>09:29</fit-text><fit-text .w=${73}>01.06.2023</fit-text></div>
            <span class="count3">3</span>
          </div>
        </div>
      </div>`;
  }
}
